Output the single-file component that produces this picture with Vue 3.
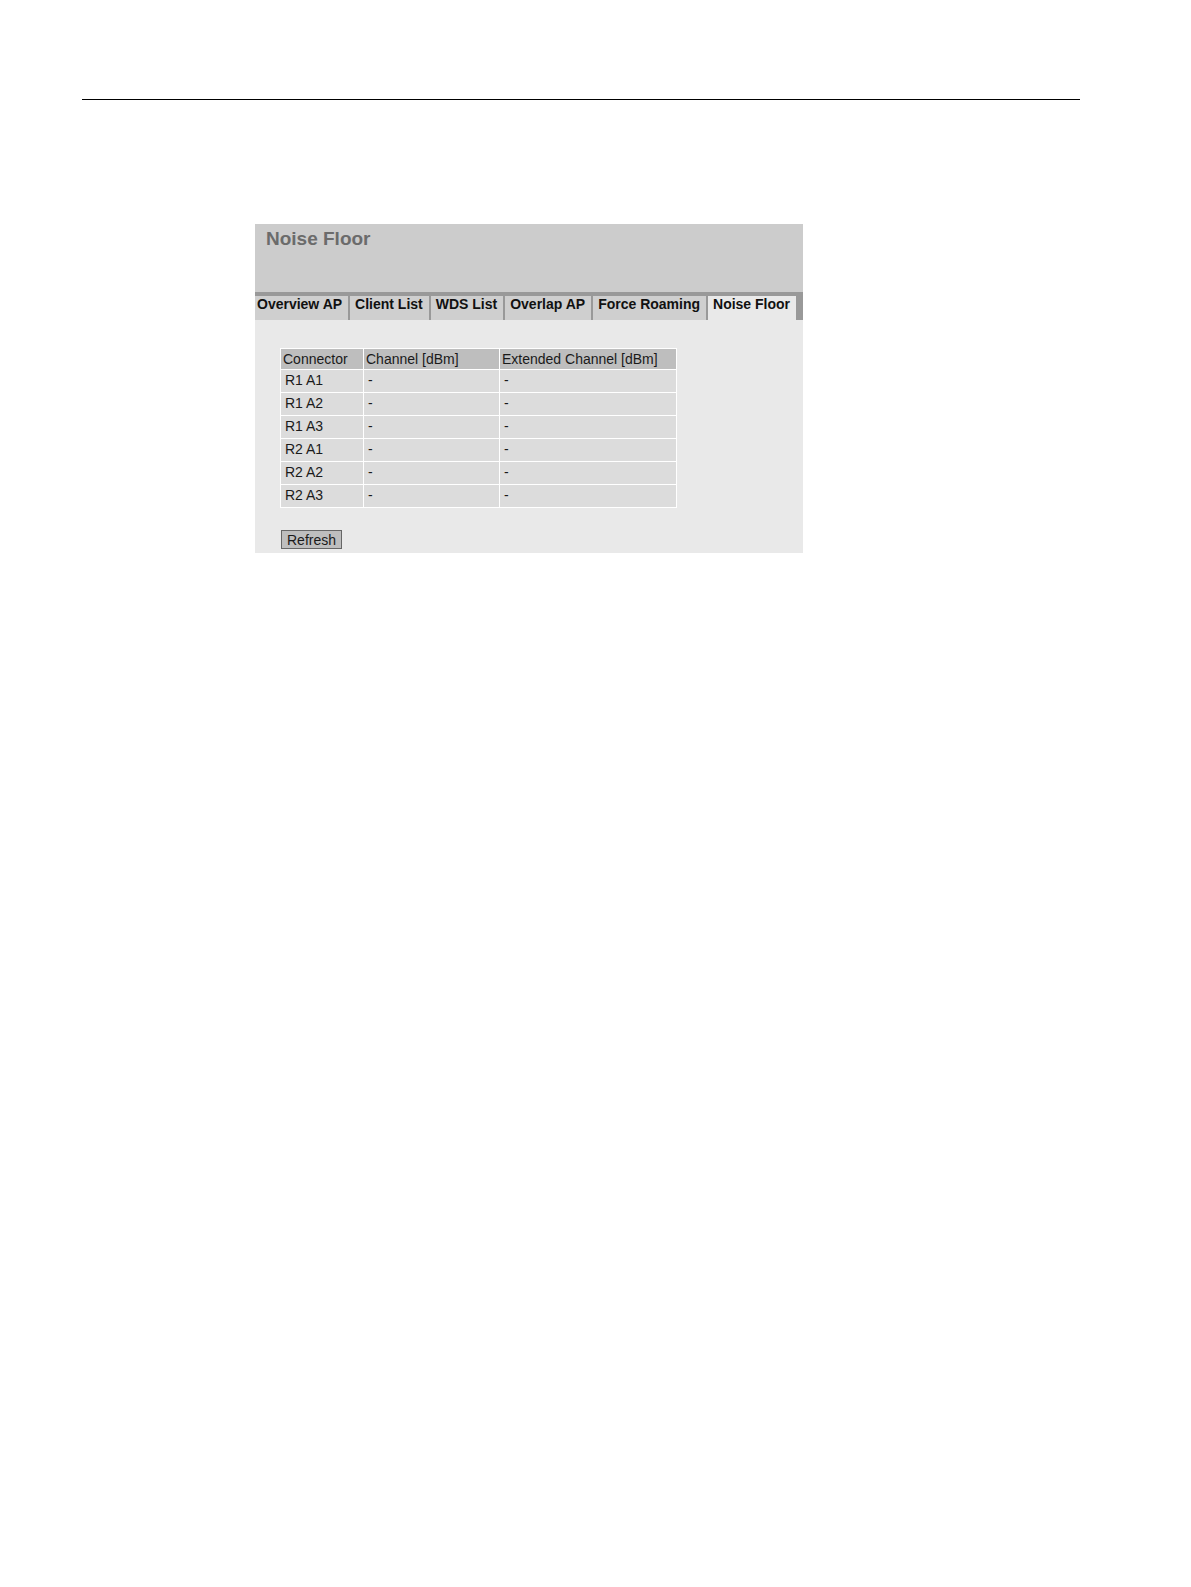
<template>
  <main class="page">
    <hr class="page-rule" />

    <section class="panel">
      <header class="panel-head">
        <h1 class="panel-title">Noise Floor</h1>
      </header>

      <nav class="tabs">
        <a
          v-for="tab in tabs"
          :key="tab"
          href="#"
          class="tab"
          :class="{ active: tab === activeTab }"
          @click.prevent="activeTab = tab"
        >{{ tab }}</a>
      </nav>

      <div class="panel-body">
        <table class="noise-table">
          <thead>
            <tr>
              <th class="col-connector" scope="col">Connector</th>
              <th class="col-channel" scope="col">Channel [dBm]</th>
              <th class="col-extended" scope="col">Extended Channel [dBm]</th>
            </tr>
          </thead>
          <tbody>
            <tr v-for="row in rows" :key="row.connector">
              <td>{{ row.connector }}</td>
              <td>{{ row.channel }}</td>
              <td>{{ row.extended }}</td>
            </tr>
          </tbody>
        </table>

        <button type="button" class="refresh">Refresh</button>
      </div>
    </section>
  </main>
</template>

<script setup>
import { ref } from 'vue'

const tabs = ['Overview AP', 'Client List', 'WDS List', 'Overlap AP', 'Force Roaming', 'Noise Floor']
const activeTab = ref('Noise Floor')

const rows = ['R1 A1', 'R1 A2', 'R1 A3', 'R2 A1', 'R2 A2', 'R2 A3'].map((connector) => ({
  connector,
  channel: '-',
  extended: '-',
}))
</script>

<style>
body { background: #fff; }
</style>

<style scoped>
.page {
  padding: 99px 111px 40px 82px;
  font-family: 'Liberation Sans', Arial, sans-serif;
  font-size: 14px; line-height: 16px; color: #1A1A1A;
}

.page-rule { height: 1px; margin: 0; border: none; background: #000; }

.panel {
  max-width: 548px; margin: 124px 0 0 173px;
  background: #E9E9E9;
}

/* Head */
.panel-head { height: 68px; padding: 4px 11px; box-sizing: border-box; background: #CCCCCC; }
.panel-title { margin: 0; font-size: 19px; line-height: 22px; font-weight: 700; color: #6B6B6B; }

/* Tabs */
.tabs {
  display: flex; gap: 2px;
  padding: 4px 7px 0 0; background: #999999;
}
.tab {
  flex: 1 1 auto; height: 24px; padding: 0 4px 0 5px;
  background: #CFCFCF; color: #111;
  font-weight: 700; line-height: 17px;
  text-decoration: none; white-space: nowrap;
}
.tab:first-child { padding-left: 2px; }
.tab.active { background: #E9E9E9; }

/* Body */
.panel-body { padding: 28px 25px 4px; }

.noise-table { border-collapse: collapse; margin-bottom: 22px; }
.noise-table th,
.noise-table td {
  box-sizing: border-box; border: 1px solid #FFF;
  text-align: left; font-weight: 400;
}
.noise-table th { height: 21px; padding: 0 2px; background: #BEBEBE; }
.noise-table td { height: 23px; padding: 0 4px 2px; background: #DCDCDC; }
.col-connector { width: 83px; }
.col-channel { width: 136px; }
.col-extended { width: 177px; }

.refresh {
  display: block; height: 19px; padding: 0 5px; margin-left: 1px;
  border: 1px solid #666; border-radius: 0;
  background: #BEBEBE; color: #1A1A1A;
  font: inherit; cursor: pointer;
}
</style>
